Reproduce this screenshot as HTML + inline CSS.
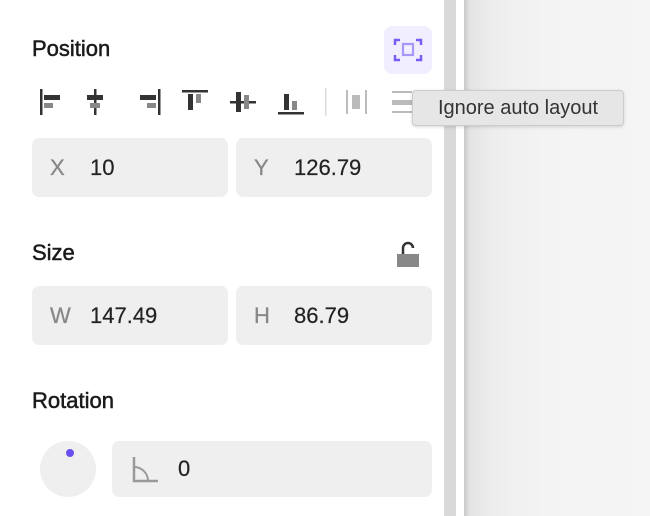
<!DOCTYPE html><html><head><style>
body{margin:0;width:650px;height:516px;position:relative;overflow:hidden;background:#fff;font-family:"Liberation Sans",sans-serif;}
.a{position:absolute}
.t{font-size:22px;color:#1a1a1a;-webkit-text-stroke:0.5px #1a1a1a}
.f{position:absolute;background:#efefef;border-radius:7px;height:59px;font-size:22px;color:#222;line-height:59px;-webkit-text-stroke:0.2px #222}
.f b{font-weight:normal;color:#888;position:absolute;left:18px;-webkit-text-stroke:0.3px #888}
.f span{position:absolute;left:58px}
</style></head><body>
<div class="a" style="left:444px;top:0;width:12px;height:516px;background:#d9d9d9"></div>
<div class="a" style="left:464px;top:0;width:186px;height:516px;background:linear-gradient(90deg,#c8c8c8,#e4e4e4 6px,#eeeeee 30px,#f3f3f3 80px,#f5f5f5)"></div>
<div class="a t" style="left:32px;top:36px">Position</div>
<div class="a" style="left:384px;top:26px;width:48px;height:48px;border-radius:8px;background:#f1efff"></div>
<svg class="a" style="left:384px;top:26px" width="48" height="48" fill="none" stroke="#7a5cf5" stroke-width="2.5">
<path d="M11 19v-5h5M32 14h5v5M37 29v5h-5M16 34h-5v-5"/><rect x="19" y="18" width="10" height="11" stroke="#a896f8" stroke-width="2.2"/></svg>
<svg class="a" style="left:36px;top:86px" width="380" height="32">
<g fill="#333"><rect x="4" y="3" width="2.5" height="26"/><rect x="8" y="9" width="16" height="5"/><rect x="8" y="17" width="9" height="5" fill="#888"/>
<rect x="58" y="3" width="2.5" height="26"/><rect x="51" y="9" width="16" height="5"/><rect x="54" y="17" width="10" height="5" fill="#888"/>
<rect x="122" y="3" width="2.5" height="26"/><rect x="104" y="9" width="16" height="5"/><rect x="111" y="17" width="9" height="5" fill="#888"/>
<rect x="146" y="4" width="26" height="2.5"/><rect x="152" y="8" width="5" height="16"/><rect x="160" y="8" width="5" height="9" fill="#888"/>
<rect x="194" y="15" width="26" height="2.5"/><rect x="200" y="6" width="5" height="20"/><rect x="208" y="9" width="5" height="14" fill="#888"/>
<rect x="242" y="26" width="26" height="2.5"/><rect x="248" y="8" width="5" height="16"/><rect x="256" y="15" width="5" height="9" fill="#888"/>
<rect x="289" y="2" width="1.5" height="28" fill="#ddd"/>
<g fill="#bbb"><rect x="310" y="4" width="2" height="24"/><rect x="329" y="4" width="2" height="24"/><rect x="316" y="9" width="8" height="14"/>
<rect x="356" y="5" width="20" height="2"/><rect x="356" y="14" width="20" height="5"/><rect x="356" y="25" width="20" height="2"/></g></g></svg>
<div class="a" style="left:412px;top:90px;width:212px;height:36px;background:#e6e6e6;border:1px solid #ccc;border-radius:4px;box-sizing:border-box;font-size:20px;color:#333;line-height:34px;text-align:center;box-shadow:0 1px 3px rgba(0,0,0,.15)">Ignore auto layout</div>
<div class="f" style="left:32px;top:138px;width:196px"><b>X</b><span>10</span></div>
<div class="f" style="left:236px;top:138px;width:196px"><b>Y</b><span>126.79</span></div>
<div class="a t" style="left:32px;top:240px">Size</div>
<svg class="a" style="left:394px;top:240px" width="28" height="30"><path d="M9 14V8a5 5 0 0 1 10 0" fill="none" stroke="#333" stroke-width="2.5"/><rect x="3" y="14" width="22" height="13" fill="#888"/></svg>
<div class="f" style="left:32px;top:286px;width:196px"><b>W</b><span>147.49</span></div>
<div class="f" style="left:236px;top:286px;width:196px"><b>H</b><span>86.79</span></div>
<div class="a t" style="left:32px;top:388px">Rotation</div>
<div class="a" style="left:40px;top:441px;width:56px;height:56px;border-radius:50%;background:#efefef"></div>
<div class="a" style="left:66px;top:449px;width:8px;height:8px;border-radius:50%;background:#6b4ef0"></div>
<div class="f" style="left:112px;top:441px;width:320px;height:56px;line-height:56px"><span style="left:66px">0</span>
<svg class="a" style="left:20px;top:14px" width="28" height="28" fill="none" stroke="#999" stroke-width="2.5"><path d="M2 2v24h24"/><path d="M2 12a14 14 0 0 1 14 14" stroke-width="2"/></svg></div>
</body></html>
